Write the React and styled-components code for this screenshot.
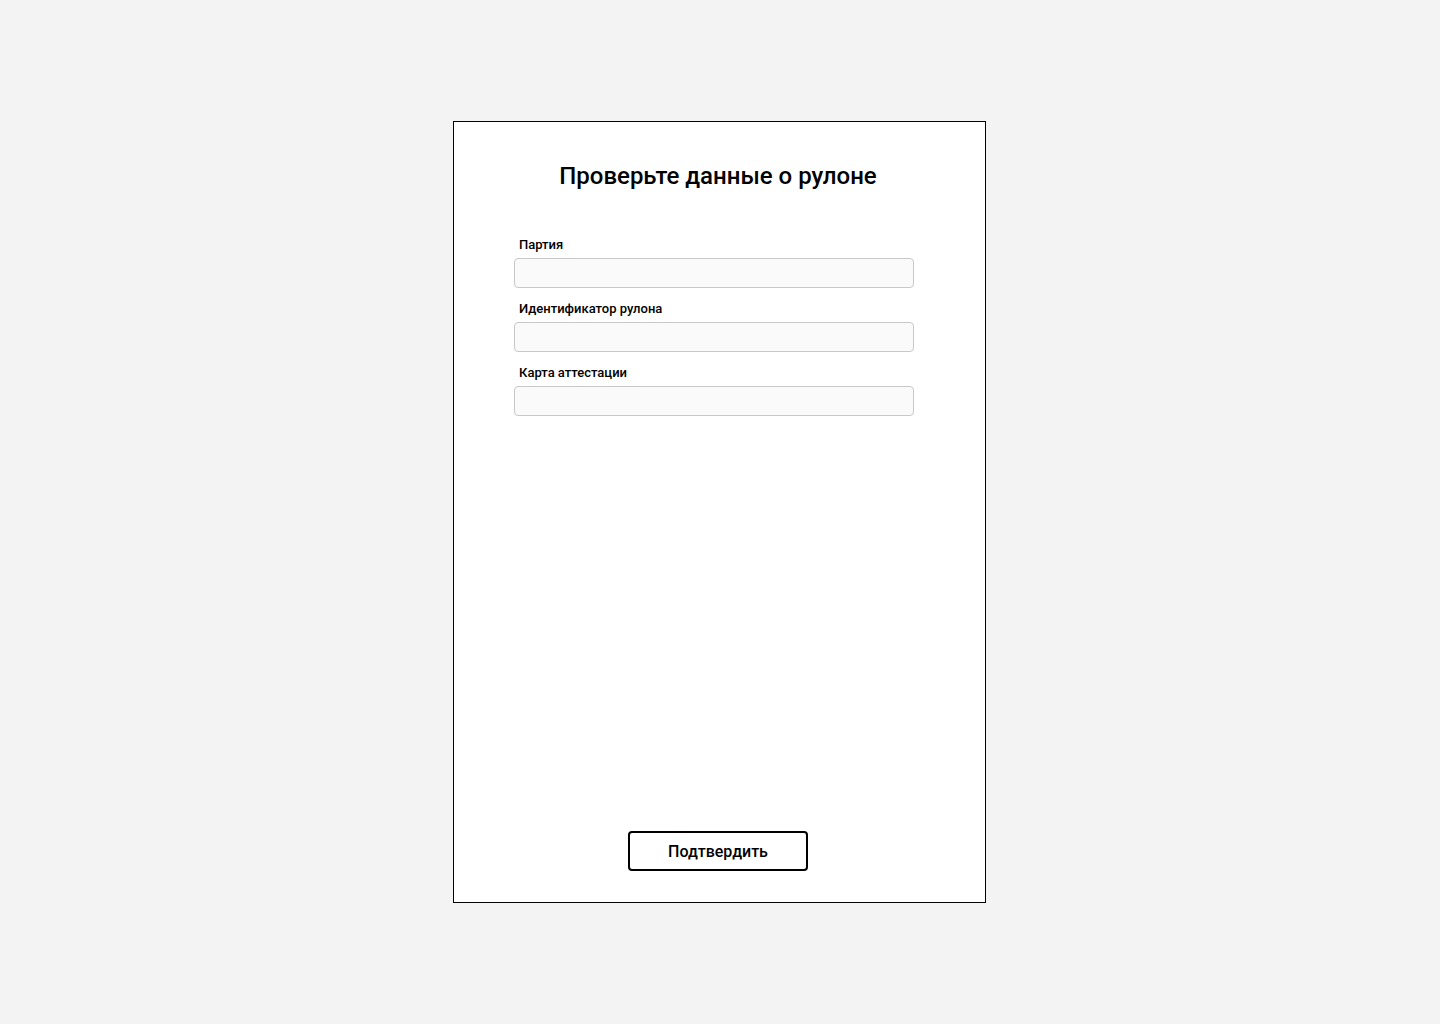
import React from 'react';
import styled, { createGlobalStyle } from 'styled-components';

const GlobalStyle = createGlobalStyle`
  html, body {
    margin: 0;
    padding: 0;
    background: #f3f3f3;
    font-family: Roboto, "Noto Sans", "Liberation Sans", sans-serif;
  }
  * {
    box-sizing: border-box;
  }
`;

const Page = styled.div`
  min-height: 1024px;
  display: flex;
  align-items: center;
  justify-content: center;
  padding-right: 1px;
`;

const Card = styled.div`
  width: 533px;
  height: 782px;
  background: #fff;
  border: 1px solid #000;
  display: flex;
  flex-direction: column;
  align-items: center;
  padding: 40px 3px 31px 0;
`;

const Title = styled.h1`
  margin: 0;
  font-size: 24px;
  line-height: 28px;
  font-weight: 500;
  color: #000;
  text-align: center;
`;

const Form = styled.form`
  align-self: stretch;
  display: flex;
  flex-direction: column;
  gap: 12px;
  padding: 0 60px;
  margin-top: 46px;
`;

const Field = styled.div`
  width: 400px;
  display: flex;
  flex-direction: column;
  gap: 5px;
`;

const Label = styled.label`
  padding-left: 5px;
  font-size: 13px;
  line-height: 17px;
  font-weight: 500;
  color: #000;
`;

const Input = styled.input`
  height: 30px;
  width: 100%;
  border: 1px solid #c8c8c8;
  border-radius: 4px;
  background: #fafafa;
  padding: 0 8px;
  font-family: inherit;
  font-size: 14px;
  outline: none;
`;

const Button = styled.button`
  margin-top: auto;
  width: 180px;
  height: 40px;
  border: 2px solid #000;
  border-radius: 4px;
  background: #fff;
  font-family: inherit;
  font-size: 16px;
  font-weight: 500;
  color: #000;
  cursor: pointer;
`;

const fields = ['Партия', 'Идентификатор рулона', 'Карта аттестации'];

const App = () => (
  <>
    <GlobalStyle />
    <Page>
      <Card>
        <Title>Проверьте данные о рулоне</Title>
        <Form onSubmit={(e) => e.preventDefault()}>
          {fields.map((name, i) => (
            <Field key={name}>
              <Label htmlFor={`field-${i}`}>{name}</Label>
              <Input id={`field-${i}`} type="text" />
            </Field>
          ))}
        </Form>
        <Button type="button">Подтвердить</Button>
      </Card>
    </Page>
  </>
);

export default App;
